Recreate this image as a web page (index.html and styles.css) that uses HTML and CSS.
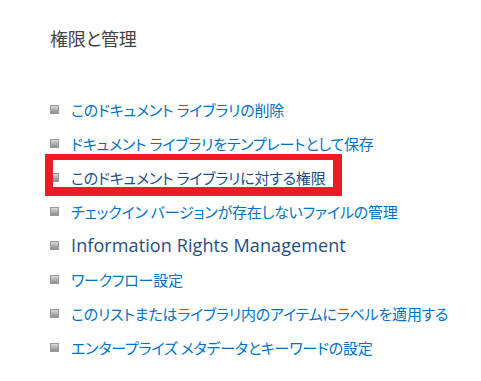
FILE: index.html
```html
<!DOCTYPE html>
<html lang="ja">
<head>
    <meta charset="UTF-8">
    <meta name="viewport" content="width=device-width, initial-scale=1.0">
    <title>権限と管理</title>
    <link rel="stylesheet" href="styles.css">
</head>
<body>
    <div class="container">
        <h2>権限と管理</h2>
        <ul class="menu">
            <li><a href="#">このドキュメント ライブラリの削除</a></li>
            <li><a href="#">ドキュメント ライブラリをテンプレートとして保存</a></li>
            <li class="marked"><a href="#" class="visited">このドキュメント ライブラリに対する権限</a></li>
            <li><a href="#">チェックイン バージョンが存在しないファイルの管理</a></li>
            <li><a href="#" class="visited latin">Information Rights Management</a></li>
            <li><a href="#">ワークフロー設定</a></li>
            <li><a href="#">このリストまたはライブラリ内のアイテムにラベルを適用する</a></li>
            <li><a href="#">エンタープライズ メタデータとキーワードの設定</a></li>
        </ul>
    </div>
</body>
</html>
```

FILE: styles.css
```css
*{
    margin: 0;
    padding: 0;
    box-sizing: border-box;
}
body{
    background: #fff;
    font-family: "Noto Sans CJK JP", sans-serif;
    font-feature-settings: "palt";
}
.container{
    padding: 25px 0 0 50px;
}
h2{
    font-size: 18px;
    font-weight: normal;
    color: #444;
    line-height: 26px;
    letter-spacing: -0.3px;
}
.menu{
    list-style: none;
    margin-top: 41px;
}
.menu li{
    display: flex;
    align-items: center;
    height: 34px;
}
/* 小さな灰色の四角 */
.menu li::before{
    content: "";
    width: 7px;
    height: 7px;
    margin-right: 12px;
    border: 1px solid #9a9a9a;
    background: linear-gradient(#d8d8d8, #8c8c8c);
    flex-shrink: 0;
}
.menu a{
    font-size: 15px;
    color: #0072c6;
    text-decoration: none;
    white-space: nowrap;
    letter-spacing: -0.2px;
}
.menu a.visited{
    color: #1f4e84;
}
.menu a.latin{
    font-family: "Open Sans", sans-serif;
    font-size: 18px;
    letter-spacing: 0.1px;
}
.menu li.marked{
    position: relative;
    width: fit-content;
}
/* 赤枠 */
.menu li.marked::after{
    content: "";
    position: absolute;
    left: -5px;
    right: -17px;
    top: -6px;
    bottom: -2px;
    border-style: solid;
    border-color: #ec1c24;
    border-width: 6px 9px 9px 8px;
}
```
